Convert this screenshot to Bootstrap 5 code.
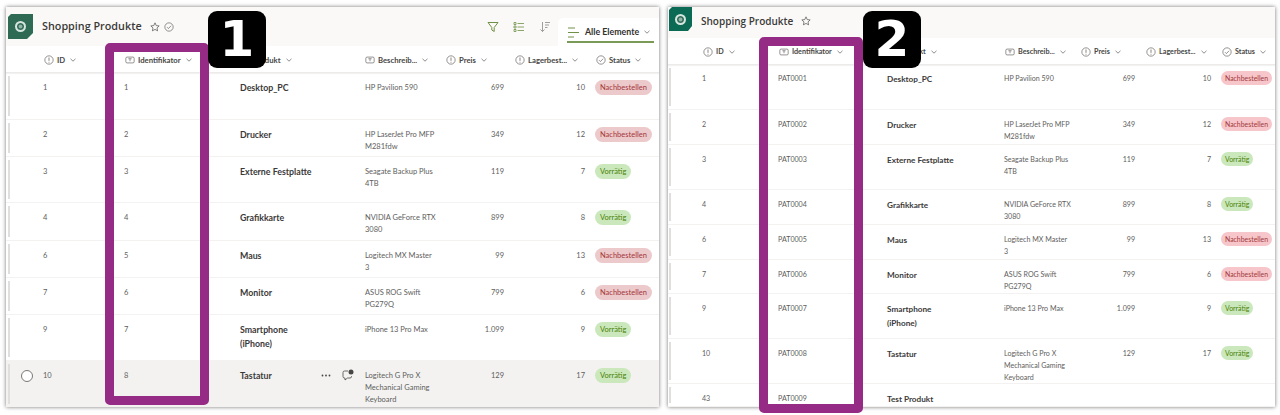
<!DOCTYPE html>
<html lang="de"><head><meta charset="utf-8">
<title>Shopping Produkte</title>
<link rel="stylesheet" href="https://cdn.jsdelivr.net/npm/bootstrap@5.3.0/dist/css/bootstrap.min.css">
<style>
html,body{height:415px;overflow:hidden;background:#fff}
body{font-family:Lato,"Open Sans",sans-serif;color:#605e5c;font-size:7.500px;line-height:12px;padding:7px 5px 8px 6px;gap:9px}
.sp-right{font-size:7.100px}
.sp-panel{background:#fff;box-shadow:0 0 4px rgba(0,0,0,.55);overflow:visible;position:relative;height:400px}
.sp-left{width:653px}.sp-right{width:607px}
.sp-top{background:#faf9f8}
.sp-left .sp-top{height:39px;padding-left:2px}
.sp-right .sp-top{height:31px;padding-left:1px}
.sp-logo{width:25px;height:25px;background:#2f6a55;clip-path:polygon(3px 0,100% 0,100% 19px,19px 100%,0 100%,0 3px)}
.sp-right .sp-logo{width:23px;height:24px;background:#0b6a53;margin-top:-7px}
.sp-logo i{width:11px;height:11px;border:2.500px solid #d5e5df;border-radius:50%;display:block;background:#8fb3a6;box-shadow:inset 0 0 0 1.500px #2f6a55}
.sp-title{font-family:"Open Sans",sans-serif;font-size:10.800px;font-weight:600;color:#3b3a39;white-space:nowrap;margin-left:9px;margin-top:-1px}
.sp-right .sp-title{font-size:10px;margin-top:-4px}
.sp-ico{width:10px;height:10px;flex:none}
.sp-mark{margin-top:0}
.sp-right .sp-mark{margin-top:-4px}
.sp-hgrid,.sp-grid{display:grid;align-items:start}
.sp-left .sp-hgrid{grid-template-columns:38px 81px 115px 125px 81px 69px 81px 1fr;height:27px}
.sp-right .sp-hgrid{grid-template-columns:35px 76px 108px 118px 76px 65px 76px 1fr;height:27px}
.sp-hgrid{border-bottom:1px solid #edebe9;box-shadow:0 1px 1px rgba(0,0,0,.05);padding-top:8px}
.sp-hcell{display:flex;align-items:center;gap:3px;font-weight:700;color:#484644;white-space:nowrap;font-size:7.700px}
.sp-right .sp-hcell{font-size:7.200px}
.sp-hcell svg.sp-ch{width:6px;height:4px;margin-left:2px}
.sp-left .sp-grid{grid-template-columns:37px 81px 116px 125px 79px 60px 81px 1fr}
.sp-right .sp-grid{grid-template-columns:34px 76px 109px 117px 79px 52px 76px 1fr}
.sp-grid{border-bottom:1px solid #f3f2f1;padding-top:9px;position:relative}
.sp-right .sp-hgrid + .sp-grid{padding-top:8px}
.sp-grid>div:nth-child(n+2){min-width:0}
.sp-bar{position:absolute;left:2px;top:3px;bottom:3px;width:2px;background:#e1dfdd}
.sp-right .sp-bar{left:1px}
.sp-name{font-size:8.800px;line-height:14px;font-weight:700;color:#3b3a39;max-width:75px;margin-top:-1px}
.sp-right .sp-name{font-size:8.200px;max-width:70px}
.sp-desc{max-width:70px}
.sp-right .sp-desc{max-width:66px}
.sp-num{text-align:right}
.sp-stat{padding-left:10px;margin-top:-2px}
.sp-pill{display:inline-block;border-radius:8px;height:15px;line-height:15px;padding:0 5px;white-space:nowrap;font-size:7.500px}
.sp-red{background:#ecc9cb;color:#a4373a}.sp-green{background:#cbe8bd;color:#498205}
.sp-right .sp-pill{height:14px;line-height:14px;font-size:6.900px;padding:0 4px}
.sp-right .sp-red{background:#f6c6ca}
.h-47{height:47px}.h-37{height:37px}.h-38{height:38px}.h-46{height:46px}.h-45{height:45px}.h-35{height:35px}.h-34{height:34px}.h-rest{flex:1}
.sp-hover{background:#f3f2f1;border-bottom:0}
.sp-radio{position:absolute;left:15px;top:9px;width:12px;height:12px;border:1px solid #7a7876;border-radius:50%;background:#fff}
.sp-acts{position:absolute;left:315px;top:8px;gap:11px;color:#484644}
.sp-tab{width:101px;height:28px;margin-top:11px;margin-left:-7px;background:#fff;border-top-left-radius:5px;font-weight:700;font-size:8.800px;color:#323130;gap:5px;position:relative;padding-left:10px;white-space:nowrap}
.sp-tab::after{content:"";position:absolute;left:9px;right:5px;bottom:3px;height:2px;background:#7a9b57}
.sp-tools{gap:14px;margin-top:0}
.sp-box{position:absolute;border:9px solid #962b85;border-radius:5px;pointer-events:none}
.sp-box-l{left:99px;top:36px;width:104px;height:362px}
.sp-box-r{left:91px;top:30px;width:104px;height:376px}
.sp-num-tag{position:absolute;top:4px;width:58px;height:57px;background:#000;color:#fff;border-radius:9px;font-family:"DejaVu Sans",sans-serif;font-weight:700;font-size:50px;line-height:57px;text-align:center}
.sp-tag-l{left:202px}.sp-tag-r{left:195px}
</style></head>
<body class="d-flex">
<svg width="0" height="0" class="position-absolute">
<symbol id="i-num" viewBox="0 0 12 12"><circle cx="6" cy="6" r="5" fill="none" stroke="#605e5c" stroke-width=".8"/><path d="M6 3v4M6 8.200v1" stroke="#605e5c" stroke-width=".9"/></symbol>
<symbol id="i-txt" viewBox="0 0 12 12"><rect x="1" y="2.500" width="10" height="7" rx="1.500" fill="none" stroke="#605e5c" stroke-width=".8"/><path d="M4 4.500h4M6 4.500v3" stroke="#605e5c" stroke-width=".8"/></symbol>
<symbol id="i-chk" viewBox="0 0 12 12"><circle cx="6" cy="6" r="5" fill="none" stroke="#605e5c" stroke-width=".8"/><path d="M3.600 6.200l1.700 1.700 3.200-3.400" fill="none" stroke="#605e5c" stroke-width=".8"/></symbol>
<symbol id="i-ch" viewBox="0 0 6 4"><path d="M.5.8L3 3.200 5.500.8" fill="none" stroke="#605e5c" stroke-width=".7"/></symbol>
<symbol id="i-star" viewBox="0 0 12 12"><path d="M6 1l1.500 3.300 3.500.4-2.600 2.400.7 3.500L6 8.900l-3.100 1.700.7-3.500L1 4.700l3.500-.4z" fill="none" stroke="#484644" stroke-width=".8"/></symbol>
</svg>

<section class="sp-panel sp-left d-flex flex-column flex-shrink-0">
  <header class="sp-top d-flex align-items-center">
    <div class="sp-logo d-flex align-items-center justify-content-center"><i></i></div>
    <div class="sp-title">Shopping Produkte</div>
    <svg class="sp-ico ms-2 sp-mark"><use href="#i-star"/></svg>
    <svg class="sp-ico ms-1 sp-mark"><use href="#i-chk"/></svg>
    <div class="ms-auto d-flex align-items-center sp-tools">
      <svg width="12" height="12" viewBox="0 0 12 12"><path d="M1 1.500h10L7.200 6.500v4L4.800 9V6.500z" fill="none" stroke="#6f9145" stroke-width="1"/></svg>
      <svg width="12" height="12" viewBox="0 0 12 12"><path d="M4.500 2.500H11M4.500 6H11M4.500 9.500H11M1 1.500h2v2H1zM1 5h2v2H1zM1 8.500h2v2H1z" fill="none" stroke="#6f9145" stroke-width=".8"/></svg>
      <svg width="12" height="12" viewBox="0 0 12 12"><path d="M3.500 1v9.500M1.500 8.500l2 2 2-2M6 1.500h5M6 4h4M6 6.500h2.500" fill="none" stroke="#8a8886" stroke-width=".8"/></svg>
      <div class="sp-tab d-flex align-items-center">
        <svg width="12" height="11" viewBox="0 0 12 11"><path d="M0 1h7M0 5.500h11M0 10h6" stroke="#6f9145" stroke-width="1"/></svg>
        <span>Alle Elemente</span>
        <svg width="6" height="4"><use href="#i-ch"/></svg>
      </div>
    </div>
  </header>
  <div class="sp-hgrid">
    <div></div>
    <div class="sp-hcell"><svg class="sp-ico"><use href="#i-num"/></svg>ID<svg class="sp-ch"><use href="#i-ch"/></svg></div>
    <div class="sp-hcell"><svg class="sp-ico"><use href="#i-txt"/></svg>Identifikator<svg class="sp-ch"><use href="#i-ch"/></svg></div>
    <div class="sp-hcell"><svg class="sp-ico"><use href="#i-txt"/></svg>Produkt<svg class="sp-ch"><use href="#i-ch"/></svg></div>
    <div class="sp-hcell"><svg class="sp-ico"><use href="#i-txt"/></svg>Beschreib...<svg class="sp-ch"><use href="#i-ch"/></svg></div>
    <div class="sp-hcell"><svg class="sp-ico"><use href="#i-num"/></svg>Preis<svg class="sp-ch"><use href="#i-ch"/></svg></div>
    <div class="sp-hcell"><svg class="sp-ico"><use href="#i-num"/></svg>Lagerbest...<svg class="sp-ch"><use href="#i-ch"/></svg></div>
    <div class="sp-hcell"><svg class="sp-ico"><use href="#i-chk"/></svg>Status<svg class="sp-ch"><use href="#i-ch"/></svg></div>
  </div>
  <div class="sp-grid h-47"><span class="sp-bar"></span><div></div><div>1</div><div>1</div><div class="sp-name">Desktop_PC</div><div class="sp-desc">HP Pavilion 590</div><div class="sp-num">699</div><div class="sp-num">10</div><div class="sp-stat"><span class="sp-pill sp-red">Nachbestellen</span></div></div>
  <div class="sp-grid h-37"><span class="sp-bar"></span><div></div><div>2</div><div>2</div><div class="sp-name">Drucker</div><div class="sp-desc">HP LaserJet Pro MFP M281fdw</div><div class="sp-num">349</div><div class="sp-num">12</div><div class="sp-stat"><span class="sp-pill sp-red">Nachbestellen</span></div></div>
  <div class="sp-grid h-46"><span class="sp-bar"></span><div></div><div>3</div><div>3</div><div class="sp-name">Externe Festplatte</div><div class="sp-desc">Seagate Backup Plus 4TB</div><div class="sp-num">119</div><div class="sp-num">7</div><div class="sp-stat"><span class="sp-pill sp-green">Vorrätig</span></div></div>
  <div class="sp-grid h-38"><span class="sp-bar"></span><div></div><div>4</div><div>4</div><div class="sp-name">Grafikkarte</div><div class="sp-desc text-nowrap">NVIDIA GeForce RTX<br>3080</div><div class="sp-num">899</div><div class="sp-num">8</div><div class="sp-stat"><span class="sp-pill sp-green">Vorrätig</span></div></div>
  <div class="sp-grid h-37"><span class="sp-bar"></span><div></div><div>6</div><div>5</div><div class="sp-name">Maus</div><div class="sp-desc">Logitech MX Master 3</div><div class="sp-num">99</div><div class="sp-num">13</div><div class="sp-stat"><span class="sp-pill sp-red">Nachbestellen</span></div></div>
  <div class="sp-grid h-37"><span class="sp-bar"></span><div></div><div>7</div><div>6</div><div class="sp-name">Monitor</div><div class="sp-desc">ASUS ROG Swift PG279Q</div><div class="sp-num">799</div><div class="sp-num">6</div><div class="sp-stat"><span class="sp-pill sp-red">Nachbestellen</span></div></div>
  <div class="sp-grid h-46"><span class="sp-bar"></span><div></div><div>9</div><div>7</div><div class="sp-name">Smartphone (iPhone)</div><div class="sp-desc">iPhone 13 Pro Max</div><div class="sp-num">1.099</div><div class="sp-num">9</div><div class="sp-stat"><span class="sp-pill sp-green">Vorrätig</span></div></div>
  <div class="sp-grid sp-hover h-rest"><span class="sp-bar"></span><span class="sp-radio"></span>
    <div class="sp-acts position-absolute d-flex align-items-center"><svg width="10" height="3" viewBox="0 0 10 3"><circle cx="1.500" cy="1.500" r=".9" fill="#484644"/><circle cx="5" cy="1.500" r=".9" fill="#484644"/><circle cx="8.500" cy="1.500" r=".9" fill="#484644"/></svg><svg width="12" height="12" viewBox="0 0 12 12"><path d="M6 2H2.500A1.500 1.500 0 0 0 1 3.500v4A1.500 1.500 0 0 0 2.500 9H3v2l2.500-2H8a1.500 1.500 0 0 0 1.500-1.500V7" fill="none" stroke="#484644" stroke-width=".8"/><circle cx="9" cy="3" r="2.500" fill="#484644"/></svg></div>
    <div></div><div>10</div><div>8</div><div class="sp-name">Tastatur</div><div class="sp-desc">Logitech G Pro X Mechanical Gaming Keyboard</div><div class="sp-num">129</div><div class="sp-num">17</div><div class="sp-stat"><span class="sp-pill sp-green">Vorrätig</span></div></div>
  <div class="sp-box sp-box-l"></div>
  <div class="sp-num-tag sp-tag-l">1</div>
</section>

<section class="sp-panel sp-right d-flex flex-column flex-shrink-0">
  <header class="sp-top d-flex align-items-center">
    <div class="sp-logo d-flex align-items-center justify-content-center"><i></i></div>
    <div class="sp-title">Shopping Produkte</div>
    <svg class="sp-ico ms-2 sp-mark"><use href="#i-star"/></svg>
  </header>
  <div class="sp-hgrid">
    <div></div>
    <div class="sp-hcell"><svg class="sp-ico"><use href="#i-num"/></svg>ID<svg class="sp-ch"><use href="#i-ch"/></svg></div>
    <div class="sp-hcell"><svg class="sp-ico"><use href="#i-txt"/></svg>Identifikator<svg class="sp-ch"><use href="#i-ch"/></svg></div>
    <div class="sp-hcell"><svg class="sp-ico"><use href="#i-txt"/></svg>Produkt<svg class="sp-ch"><use href="#i-ch"/></svg></div>
    <div class="sp-hcell"><svg class="sp-ico"><use href="#i-txt"/></svg>Beschreib...<svg class="sp-ch"><use href="#i-ch"/></svg></div>
    <div class="sp-hcell"><svg class="sp-ico"><use href="#i-num"/></svg>Preis<svg class="sp-ch"><use href="#i-ch"/></svg></div>
    <div class="sp-hcell"><svg class="sp-ico"><use href="#i-num"/></svg>Lagerbest...<svg class="sp-ch"><use href="#i-ch"/></svg></div>
    <div class="sp-hcell"><svg class="sp-ico"><use href="#i-chk"/></svg>Status<svg class="sp-ch"><use href="#i-ch"/></svg></div>
  </div>
  <div class="sp-grid h-45"><span class="sp-bar"></span><div></div><div>1</div><div>PAT0001</div><div class="sp-name">Desktop_PC</div><div class="sp-desc">HP Pavilion 590</div><div class="sp-num">699</div><div class="sp-num">10</div><div class="sp-stat"><span class="sp-pill sp-red">Nachbestellen</span></div></div>
  <div class="sp-grid h-35"><span class="sp-bar"></span><div></div><div>2</div><div>PAT0002</div><div class="sp-name">Drucker</div><div class="sp-desc">HP LaserJet Pro MFP M281fdw</div><div class="sp-num">349</div><div class="sp-num">12</div><div class="sp-stat"><span class="sp-pill sp-red">Nachbestellen</span></div></div>
  <div class="sp-grid h-45"><span class="sp-bar"></span><div></div><div>3</div><div>PAT0003</div><div class="sp-name">Externe Festplatte</div><div class="sp-desc">Seagate Backup Plus 4TB</div><div class="sp-num">119</div><div class="sp-num">7</div><div class="sp-stat"><span class="sp-pill sp-green">Vorrätig</span></div></div>
  <div class="sp-grid h-35"><span class="sp-bar"></span><div></div><div>4</div><div>PAT0004</div><div class="sp-name">Grafikkarte</div><div class="sp-desc text-nowrap">NVIDIA GeForce RTX<br>3080</div><div class="sp-num">899</div><div class="sp-num">8</div><div class="sp-stat"><span class="sp-pill sp-green">Vorrätig</span></div></div>
  <div class="sp-grid h-35"><span class="sp-bar"></span><div></div><div>6</div><div>PAT0005</div><div class="sp-name">Maus</div><div class="sp-desc">Logitech MX Master 3</div><div class="sp-num">99</div><div class="sp-num">13</div><div class="sp-stat"><span class="sp-pill sp-red">Nachbestellen</span></div></div>
  <div class="sp-grid h-34"><span class="sp-bar"></span><div></div><div>7</div><div>PAT0006</div><div class="sp-name">Monitor</div><div class="sp-desc">ASUS ROG Swift PG279Q</div><div class="sp-num">799</div><div class="sp-num">6</div><div class="sp-stat"><span class="sp-pill sp-red">Nachbestellen</span></div></div>
  <div class="sp-grid h-45"><span class="sp-bar"></span><div></div><div>9</div><div>PAT0007</div><div class="sp-name">Smartphone (iPhone)</div><div class="sp-desc">iPhone 13 Pro Max</div><div class="sp-num">1.099</div><div class="sp-num">9</div><div class="sp-stat"><span class="sp-pill sp-green">Vorrätig</span></div></div>
  <div class="sp-grid h-45"><span class="sp-bar"></span><div></div><div>10</div><div>PAT0008</div><div class="sp-name">Tastatur</div><div class="sp-desc">Logitech G Pro X Mechanical Gaming Keyboard</div><div class="sp-num">129</div><div class="sp-num">17</div><div class="sp-stat"><span class="sp-pill sp-green">Vorrätig</span></div></div>
  <div class="sp-grid h-rest"><span class="sp-bar"></span><div></div><div>43</div><div>PAT0009</div><div class="sp-name">Test Produkt</div><div></div><div></div><div></div><div></div></div>
  <div class="sp-box sp-box-r"></div>
  <div class="sp-num-tag sp-tag-r">2</div>
</section>
</body></html>
